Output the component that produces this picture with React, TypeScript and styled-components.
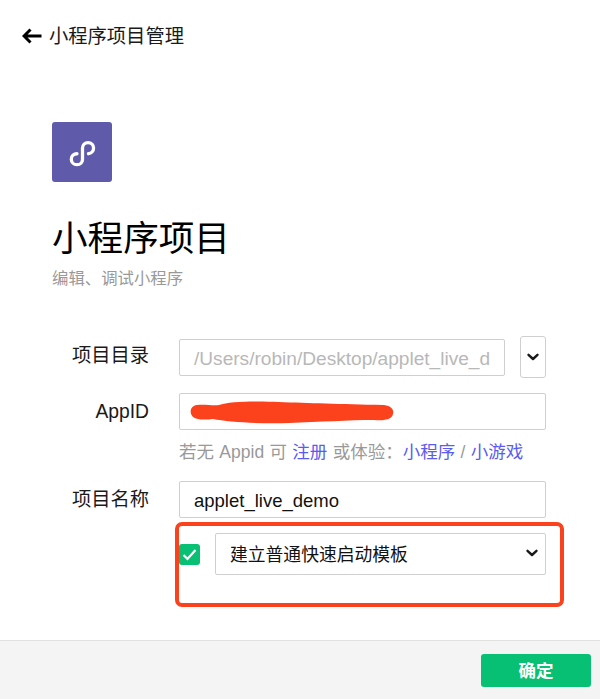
import { createGlobalStyle, styled } from 'styled-components'

const GlobalStyle = createGlobalStyle`
html, body {
  margin: 0;
  padding: 0;
  background: #fff;
  font-family: "Liberation Sans", "Noto Sans CJK SC", sans-serif;
}
`

const ChevronIcon = () => (
    <svg width="14" height="10" viewBox="0 0 14 10" fill="none">
        <path d="M2.5 2.8 L7 7 L11.5 2.8" stroke="#1a1a1a" strokeWidth="2.4" strokeLinecap="round" strokeLinejoin="round" />
    </svg>
)

const App = () => {
    return (
        <Page>
            <GlobalStyle />
            <Header>
                <svg width="20" height="16" viewBox="0 0 20 16" fill="none">
                    <path d="M19.5 8 H2.5 M8.5 1.5 L2 8 L8.5 14.5" stroke="#000" strokeWidth="3" />
                </svg>
                <HeaderTitle>小程序项目管理</HeaderTitle>
            </Header>

            <Intro>
                <Logo>
                    <svg width="31" height="31" viewBox="-1.4 -0.5 28 28" fill="none">
                        <path
                            d="M2.5 19.5 C2.5 16.5 4.7 14.6 7.6 14.6 M7.6 24.5 C4.7 24.5 2.5 22.4 2.5 19.5 M7.6 24.5 C10.6 24.5 12.6 22.2 12.6 19.5 V9.5 C12.6 6.6 14.8 4.5 17.6 4.5 C20.5 4.5 22.6 6.7 22.6 9.5 C22.6 12.3 20.5 14.4 18 14.6"
                            stroke="#fff"
                            strokeWidth="3"
                            strokeLinecap="round"
                        />
                    </svg>
                </Logo>
                <Heading>小程序项目</Heading>
                <Sub>编辑、调试小程序</Sub>
            </Intro>

            <Form>
                <Row $top={0}>
                    <Label $lineHeight={34}>项目目录</Label>
                    <Field>
                        <Input $muted>/Users/robin/Desktop/applet_live_d</Input>
                        <MiniSelect><ChevronIcon /></MiniSelect>
                    </Field>
                </Row>
                <Row $top={17}>
                    <Label $lineHeight={38}>AppID</Label>
                    <Field>
                        <Input>
                            <Scribble width="206" height="24" viewBox="0 0 206 24">
                                <path
                                    d="M8 4 C16 3 24 5 30 4 C40 0 70 0 90 1 C120 2 150 3 195 4 C203 5 205 9 204 13 C203 18 197 20 185 19 C160 19 130 21 100 22 C70 23 40 21 24 18 C16 19 8 19 4 16 C0 12 1 5 8 4 Z"
                                    fill="#fb421d"
                                />
                            </Scribble>
                        </Input>
                    </Field>
                </Row>
                <Hint>
                    若无 Appid 可 <HintLink>注册</HintLink> 或体验：<HintLink>小程序</HintLink> / <HintLink>小游戏</HintLink>
                </Hint>
                <Row $top={18}>
                    <Label $lineHeight={38}>项目名称</Label>
                    <Field>
                        <Input>applet_live_demo</Input>
                    </Field>
                </Row>
                <TemplateRow>
                    <Checkbox>
                        <svg width="15" height="13" viewBox="0 0 15 13" fill="none">
                            <path d="M1.5 7 L5.5 11 L13.5 2" stroke="#fff" strokeWidth="2.2" />
                        </svg>
                    </Checkbox>
                    <TemplateSelect>
                        建立普通快速启动模板
                        <ChevronIcon />
                    </TemplateSelect>
                    <Highlight />
                </TemplateRow>
            </Form>

            <Footer>
                <ConfirmButton>确定</ConfirmButton>
            </Footer>
        </Page>
    )
}

export default App

const Page = styled.div`
width: 600px;
height: 699px;
display: flex;
flex-direction: column;
background: #fff;
color: #000;
overflow: hidden;
`

const Header = styled.div`
height: 22px;
margin-top: 25px;
padding-left: 22px;
display: flex;
align-items: center;
gap: 7px;
`

const HeaderTitle = styled.div`
padding-top: 1px;
font-size: 19.3px;
line-height: 22px;
color: #1a1a1a;
`

const Intro = styled.div`
margin-top: 75px;
padding-left: 52px;
display: flex;
flex-direction: column;
`

const Logo = styled.div`
width: 60px;
height: 60px;
border-radius: 3px;
background: #5f5aaa;
display: flex;
justify-content: center;
align-items: center;
`

const Heading = styled.div`
margin-top: 34px;
height: 46px;
line-height: 46px;
font-size: 35.6px;
color: #000;
`

const Sub = styled.div`
margin-top: 5px;
font-size: 16.4px;
line-height: 22px;
color: #999;
`

const Form = styled.div`
margin-top: 50px;
display: flex;
flex-direction: column;
`

const Row = styled.div<{ $top: number }>`
margin-top: ${(p) => p.$top}px;
display: flex;
align-items: flex-start;
`

const Label = styled.div<{ $lineHeight: number }>`
width: 149px;
height: 37px;
line-height: ${(p) => p.$lineHeight}px;
text-align: right;
font-size: 19.3px;
color: #1a1a1a;
flex-shrink: 0;
`

const Field = styled.div`
margin-left: 30px;
width: 367px;
display: flex;
align-items: center;
gap: 15px;
`

const Input = styled.div<{ $muted?: boolean }>`
position: relative;
flex: 1;
height: 37px;
box-sizing: border-box;
padding-left: 14px;
border: 1px solid #cfcfcf;
border-radius: 2px;
font-size: ${(p) => (p.$muted ? '19.1px' : '18.5px')};
line-height: 37px;
white-space: nowrap;
overflow: hidden;
color: ${(p) => (p.$muted ? '#b8b8b8' : '#111')};
`

const MiniSelect = styled.div`
width: 26px;
height: 42px;
margin: -3px 0 -2px;
box-sizing: border-box;
border: 1px solid #cfcfcf;
border-radius: 3px;
display: flex;
justify-content: center;
align-items: center;
`

const Scribble = styled.svg`
position: absolute;
left: 9px;
top: 7px;
`

const Hint = styled.div`
margin: 11px 0 0 179px;
height: 22px;
font-size: 17.5px;
word-spacing: 0.5px;
line-height: 22px;
color: #999;
white-space: pre;
`

const HintLink = styled.span`
color: #5b5bf0;
`

const TemplateRow = styled.div`
position: relative;
margin: 15px 0 0 179px;
width: 367px;
display: flex;
align-items: center;
gap: 15px;
`

const Checkbox = styled.div`
width: 21px;
height: 21px;
border-radius: 3px;
background: #07c073;
display: flex;
justify-content: center;
align-items: center;
flex-shrink: 0;
`

const TemplateSelect = styled.div`
flex: 1;
height: 42px;
box-sizing: border-box;
padding: 0 6px 2px 14px;
border: 1px solid #cfcfcf;
border-radius: 2px;
display: flex;
justify-content: space-between;
align-items: center;
font-size: 17.8px;
color: #111;
`

const Highlight = styled.div`
position: absolute;
left: -4px;
top: -11px;
width: 389px;
height: 85px;
box-sizing: border-box;
border: 4px solid #fb421d;
border-radius: 7px;
pointer-events: none;
`

const Footer = styled.div`
margin-top: auto;
height: 59px;
box-sizing: border-box;
border-top: 1px solid #e2e2e2;
background: #f4f4f4;
padding: 13px 9px 0 0;
display: flex;
justify-content: flex-end;
align-items: flex-start;
`

const ConfirmButton = styled.div`
width: 110px;
height: 33px;
border-radius: 3px;
background: #07c073;
color: #fff;
font-size: 17.5px;
font-weight: 700;
line-height: 34px;
text-align: center;
`
